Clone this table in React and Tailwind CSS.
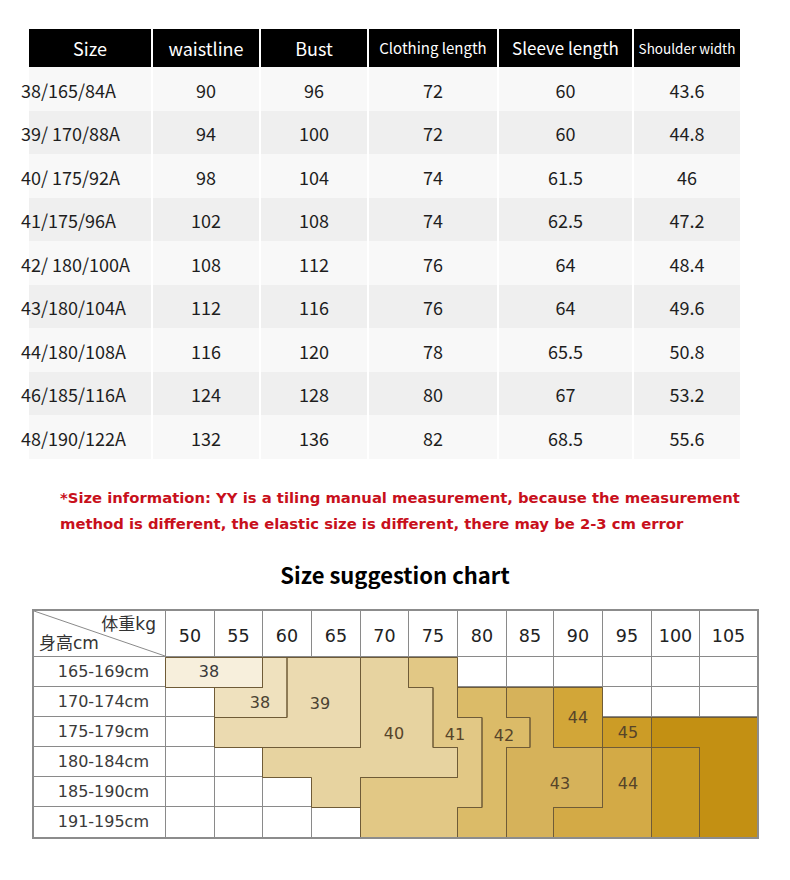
const sizeRows = [
  ["38/165/84A", "90", "96", "72", "60", "43.6"],
  ["39/ 170/88A", "94", "100", "72", "60", "44.8"],
  ["40/ 175/92A", "98", "104", "74", "61.5", "46"],
  ["41/175/96A", "102", "108", "74", "62.5", "47.2"],
  ["42/ 180/100A", "108", "112", "76", "64", "48.4"],
  ["43/180/104A", "112", "116", "76", "64", "49.6"],
  ["44/180/108A", "116", "120", "78", "65.5", "50.8"],
  ["46/185/116A", "124", "128", "80", "67", "53.2"],
  ["48/190/122A", "132", "136", "82", "68.5", "55.6"],
];

const headers = [
  { label: "Size", cls: "text-[18px]" },
  { label: "waistline", cls: "text-[18px]" },
  { label: "Bust", cls: "text-[18px]" },
  { label: "Clothing length", cls: "text-[15px]" },
  { label: "Sleeve length", cls: "text-[17px]" },
  { label: "Shoulder width", cls: "text-[13.5px]" },
];

const weights = ["50", "55", "60", "65", "70", "75", "80", "85", "90", "95", "100", "105"];
const heights = ["165-169cm", "170-174cm", "175-179cm", "180-184cm", "185-190cm", "191-195cm"];

// column edges of the chart body, px from its left side
const X = [0, 49, 97, 146, 195, 243, 292, 341, 388, 437, 486, 534, 592];
const ROW = 30;

const colX = (c) => {
  const i = Math.floor(c);
  if (i >= 12) return X[12];
  return X[i] + (X[i + 1] - X[i]) * (c - i);
};

// size zones, in (column, row) units
const zones = [
  { fill: "#f7efdc", pts: [[0, 0], [2, 0], [2, 1], [0, 1]] },
  { fill: "#efe1be", pts: [[2, 0], [2.5, 0], [2.5, 2], [1, 2], [1, 1], [2, 1]] },
  { fill: "#ebdab0", pts: [[2.5, 0], [4, 0], [4, 3], [1, 3], [1, 2], [2.5, 2]] },
  {
    fill: "#e7d3a0",
    pts: [[4, 0], [5, 0], [5, 1], [5.5, 1], [5.5, 3], [6, 3], [6, 4], [4, 4], [4, 5], [3, 5], [3, 4], [2, 4], [2, 3], [4, 3]],
  },
  {
    fill: "#e2c885",
    pts: [[5, 0], [6, 0], [6, 2], [6.5, 2], [6.5, 5], [6, 5], [6, 6], [4, 6], [4, 4], [6, 4], [6, 3], [5.5, 3], [5.5, 1], [5, 1]],
  },
  {
    fill: "#dbbb68",
    pts: [[6, 1], [7, 1], [7, 2], [7.5, 2], [7.5, 3], [7, 3], [7, 6], [6, 6], [6, 5], [6.5, 5], [6.5, 2], [6, 2]],
  },
  {
    fill: "#d6b25a",
    pts: [[7, 1], [8, 1], [8, 3], [9, 3], [9, 5], [8, 5], [8, 6], [7, 6], [7, 3], [7.5, 3], [7.5, 2], [7, 2]],
  },
  { fill: "#d2a638", pts: [[8, 1], [9, 1], [9, 3], [8, 3]] },
  { fill: "#d3aa46", pts: [[9, 3], [10, 3], [10, 6], [8, 6], [8, 5], [9, 5]] },
  { fill: "#cc9c26", pts: [[9, 2], [10, 2], [10, 3], [9, 3]] },
  { fill: "#c99a22", pts: [[10, 3], [11, 3], [11, 6], [10, 6]] },
  { fill: "#c39013", pts: [[10, 2], [12, 2], [12, 6], [11, 6], [11, 3], [10, 3]] },
];

const zoneLabels = [
  { t: "38", x: 44, y: 14, c: "#3a3a3a" },
  { t: "38", x: 95, y: 45, c: "#4a4232" },
  { t: "39", x: 155, y: 46, c: "#4a4232" },
  { t: "40", x: 229, y: 76, c: "#56442a" },
  { t: "41", x: 290, y: 77, c: "#56442a" },
  { t: "42", x: 339, y: 78, c: "#56442a" },
  { t: "44", x: 413, y: 60, c: "#56442a" },
  { t: "45", x: 463, y: 75, c: "#56442a" },
  { t: "43", x: 395, y: 126, c: "#56442a" },
  { t: "44", x: 463, y: 126, c: "#56442a" },
];

const toPoints = (pts) => pts.map(([c, r]) => `${colX(c) + 0.5},${r * ROW + 0.5}`).join(" ");

const SizeTable = () => (
  <div className="ml-[29px] w-[711px] font-['Noto_Sans_CJK_SC',sans-serif]">
    <div className="grid grid-cols-[122px_106px_106px_128px_133px_106px] gap-x-[2px]">
      {headers.map((h) => (
        <div key={h.label} className={`h-[38px] bg-black text-white flex items-center justify-center whitespace-nowrap ${h.cls}`}>
          {h.label}
        </div>
      ))}
    </div>
    {sizeRows.map((row, i) => (
      <div key={row[0]} className="grid grid-cols-[122px_106px_106px_128px_133px_106px] gap-x-[2px]">
        {row.map((cell, j) => (
          <div
            key={j}
            className={`${i % 2 === 0 ? "h-[44px] bg-[#f8f8f8]" : "h-[43px] bg-[#efefef]"} flex items-center pt-[2px] text-[18px] text-[#1e1e1e] ${j === 0 ? "justify-start" : "justify-center"}`}
          >
            {j === 0 ? <span className="-ml-[8px] whitespace-pre">{cell}</span> : cell}
          </div>
        ))}
      </div>
    ))}
  </div>
);

const SuggestionChart = () => (
  <div className="ml-[32px] w-[727px] border-2 border-[#8c8c8c] font-['DejaVu_Sans','Noto_Sans_CJK_SC',sans-serif]">
    <div className="flex h-[46px] border-b border-[#8a8a8a]">
      <div className="relative w-[131px] shrink-0">
        <svg className="absolute inset-0" width="131" height="45">
          <line x1="0" y1="0" x2="131" y2="45" stroke="#8a8a8a" strokeWidth="1" />
        </svg>
        <span className="absolute right-[9px] top-[1px] text-[17px] text-[#333]">体重kg</span>
        <span className="absolute left-[5px] bottom-[0px] text-[17px] text-[#333]">身高cm</span>
      </div>
      {weights.map((w, i) => (
        <div
          key={w}
          style={{ width: X[i + 1] - X[i] }}
          className="shrink-0 border-l border-[#8a8a8a] flex items-center justify-center pt-[5px] text-[17.5px] text-[#222]"
        >
          {w}
        </div>
      ))}
    </div>
    <div className="flex">
      <div className="w-[131px] shrink-0">
        {heights.map((h, i) => (
          <div
            key={h}
            className={`h-[30px] flex items-center justify-end pr-[16px] text-[16px] text-[#3a3a3a] ${i < 5 ? "border-b border-[#8a8a8a]" : ""}`}
          >
            {h}
          </div>
        ))}
      </div>
      <svg width="592" height="180" className="block shrink-0">
        {X.slice(0, 12).map((x) => (
          <line key={`v${x}`} x1={x + 0.5} y1="0" x2={x + 0.5} y2="180" stroke="#8a8a8a" strokeWidth="1" />
        ))}
        {[1, 2, 3, 4, 5].map((r) => (
          <line key={`h${r}`} x1="0" y1={r * ROW - 0.5} x2="592" y2={r * ROW - 0.5} stroke="#8a8a8a" strokeWidth="1" />
        ))}
        {zones.map((z, i) => (
          <polygon key={i} points={toPoints(z.pts)} fill={z.fill} />
        ))}
        {zones.map((z, i) => (
          <polygon key={`o${i}`} points={toPoints(z.pts)} fill="none" stroke="#6f5b37" strokeWidth="1" />
        ))}
        {zoneLabels.map((l, i) => (
          <text
            key={i}
            x={l.x}
            y={l.y}
            textAnchor="middle"
            dominantBaseline="central"
            fontSize="16"
            fontFamily="DejaVu Sans, sans-serif"
            fill={l.c}
          >
            {l.t}
          </text>
        ))}
      </svg>
    </div>
  </div>
);

export default function App() {
  return (
    <div className="w-[790px] h-[880px] bg-white pt-[29px] overflow-hidden">
      <SizeTable />
      <p className="mt-[26px] pl-[60px] text-[14.8px] leading-[26px] font-bold text-[#c8101c] whitespace-nowrap font-['DejaVu_Sans',sans-serif]">
        *Size information: YY is a tiling manual measurement, because the measurement
        <br />
        method is different, the elastic size is different, there may be 2-3 cm error
      </p>
      <h2 className="mt-[23px] text-center text-[22px] leading-[28px] font-bold text-black font-['Noto_Sans_CJK_SC',sans-serif]">
        Size suggestion chart
      </h2>
      <div className="mt-[21px]">
        <SuggestionChart />
      </div>
    </div>
  );
}
